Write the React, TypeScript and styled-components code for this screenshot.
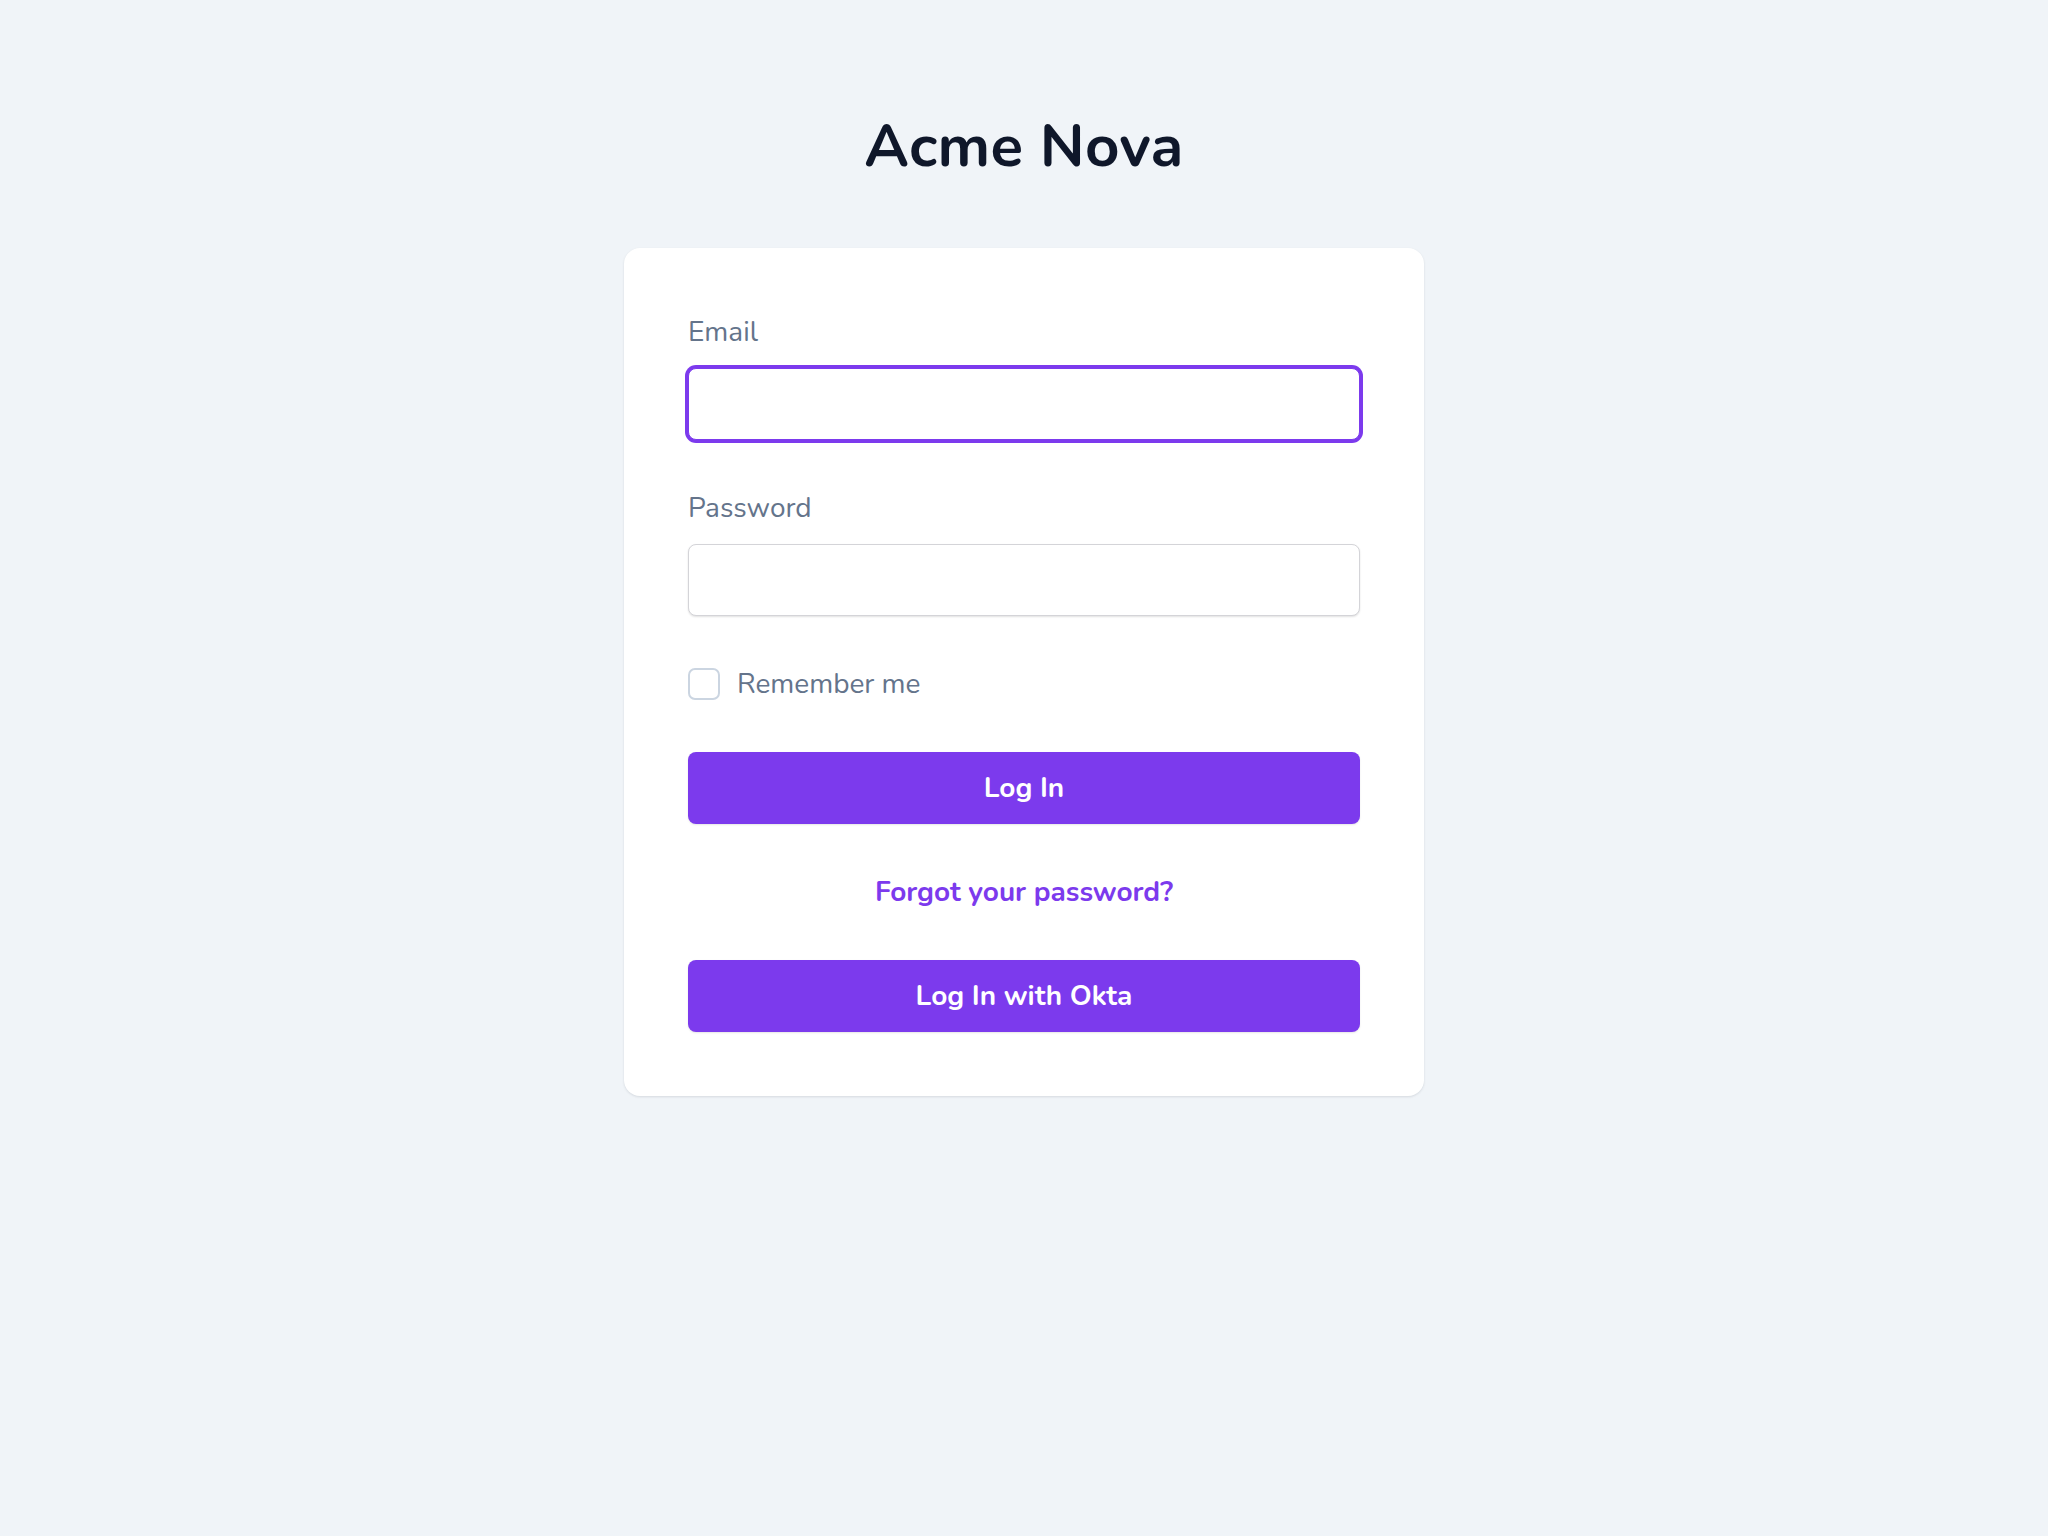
import React from "react";
import styled, { createGlobalStyle } from "styled-components";

const GlobalStyle = createGlobalStyle`
  html, body {
    margin: 0;
    padding: 0;
    background: #f0f4f8;
  }
  body {
    font-family: "Nunito", Lato, "Noto Sans", sans-serif;
    -webkit-font-smoothing: antialiased;
  }
  * { box-sizing: border-box; }
`;

const Page = styled.main`
  min-height: 1536px;
  display: flex;
  flex-direction: column;
  align-items: center;
  padding-top: 110px;
  background: #f0f4f8;
`;

const Title = styled.h1`
  margin: 0 0 66px;
  font-size: 60px;
  line-height: 72px;
  font-weight: 700;
  color: #0f172a;
  letter-spacing: 0.3px;
`;

const Card = styled.form`
  width: 800px;
  padding: 64px;
  background: #ffffff;
  border-radius: 16px;
  box-shadow: 0 1px 3px rgba(15, 23, 42, 0.08), 0 1px 2px rgba(15, 23, 42, 0.04);
  display: flex;
  flex-direction: column;
  gap: 48px;
`;

const Field = styled.div`
  display: flex;
  flex-direction: column;
  gap: 16px;
`;

const Label = styled.label`
  font-size: 28px;
  line-height: 40px;
  color: #64748b;
`;

const Input = styled.input<{ $focused?: boolean }>`
  height: 72px;
  width: 100%;
  border-radius: 8px;
  border: 1px solid ${(p) => (p.$focused ? "#7c3aed" : "#d4d4d8")};
  box-shadow: ${(p) =>
    p.$focused ? "0 0 0 3px #7c3aed" : "0 1px 2px rgba(0, 0, 0, 0.12)"};
  background: #ffffff;
  padding: 0 20px;
  font-size: 28px;
  font-family: inherit;
  outline: none;
`;

const CheckRow = styled.label`
  display: flex;
  align-items: center;
  gap: 17px;
  font-size: 28px;
  line-height: 40px;
  color: #64748b;
`;

const Box = styled.span`
  width: 32px;
  height: 32px;
  border: 2px solid #cbd5e1;
  border-radius: 7px;
  background: #ffffff;
  flex: none;
`;

const Button = styled.button`
  height: 72px;
  width: 100%;
  border: none;
  border-radius: 8px;
  background: #7c3aed;
  color: #ffffff;
  font-family: inherit;
  font-size: 28px;
  font-weight: 700;
  box-shadow: 0 1px 2px rgba(0, 0, 0, 0.1);
  cursor: pointer;
`;

const LinkRow = styled.div`
  text-align: center;
  font-size: 28px;
  line-height: 40px;
  height: 40px;
`;

const Link = styled.a`
  font-weight: 700;
  color: #7c3aed;
  text-decoration: none;
`;

export default function App() {
  return (
    <>
      <GlobalStyle />
      <Page>
        <Title>Acme Nova</Title>
        <Card onSubmit={(e) => e.preventDefault()}>
          <Field>
            <Label htmlFor="email">Email</Label>
            <Input id="email" type="email" $focused />
          </Field>
          <Field>
            <Label htmlFor="password">Password</Label>
            <Input id="password" type="password" />
          </Field>
          <CheckRow>
            <Box />
            Remember me
          </CheckRow>
          <Button type="submit">Log In</Button>
          <LinkRow>
            <Link href="#">Forgot your password?</Link>
          </LinkRow>
          <Button type="button">Log In with Okta</Button>
        </Card>
      </Page>
    </>
  );
}
